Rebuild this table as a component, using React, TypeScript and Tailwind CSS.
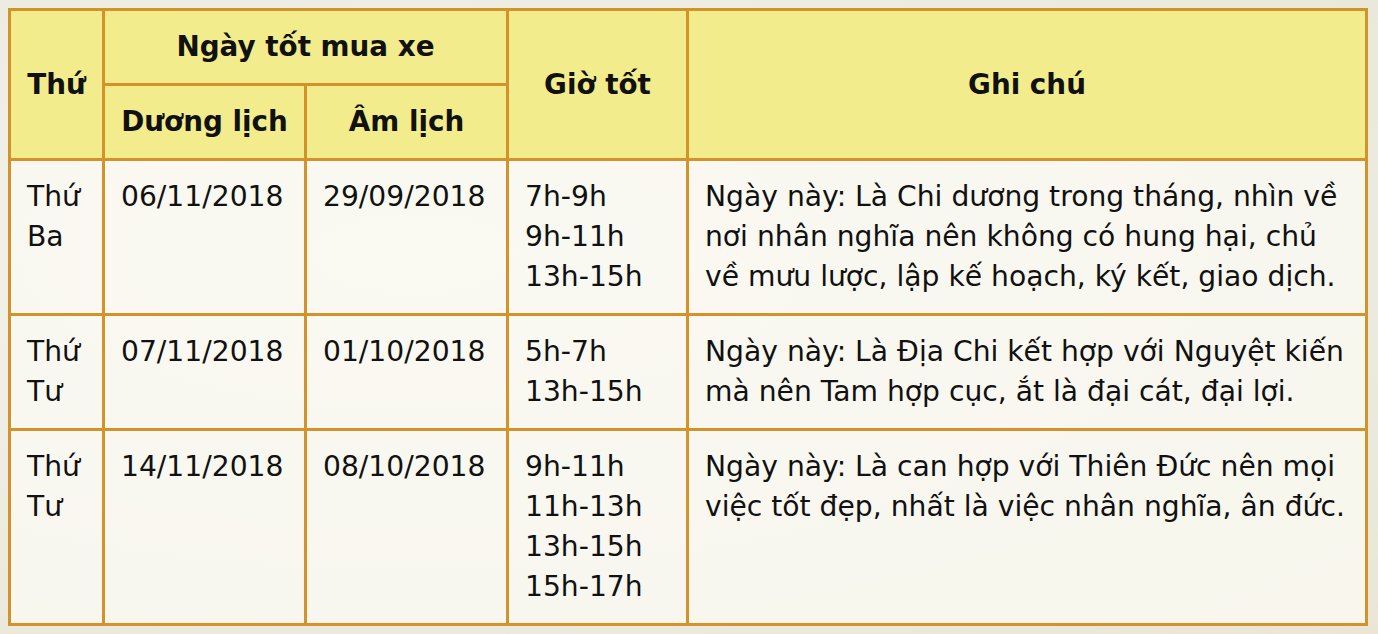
const rows = [
  {
    thu: ["Thứ", "Ba"],
    duong: "06/11/2018",
    am: "29/09/2018",
    gio: ["7h-9h", "9h-11h", "13h-15h"],
    note: [
      "Ngày này: Là Chi dương trong tháng, nhìn về",
      "nơi nhân nghĩa nên không có hung hại, chủ",
      "về mưu lược, lập kế hoạch, ký kết, giao dịch.",
    ],
  },
  {
    thu: ["Thứ", "Tư"],
    duong: "07/11/2018",
    am: "01/10/2018",
    gio: ["5h-7h", "13h-15h"],
    note: [
      "Ngày này: Là Địa Chi kết hợp với Nguyệt kiến",
      "mà nên Tam hợp cục, ắt là đại cát, đại lợi.",
    ],
  },
  {
    thu: ["Thứ", "Tư"],
    duong: "14/11/2018",
    am: "08/10/2018",
    gio: ["9h-11h", "11h-13h", "13h-15h", "15h-17h"],
    note: [
      "Ngày này: Là can hợp với Thiên Đức nên mọi",
      "việc tốt đẹp, nhất là việc nhân nghĩa, ân đức.",
    ],
  },
];

const th = "border-[3px] border-[#d3932a] bg-[#f2ec8c] px-4 py-4 text-center text-[27.8px] font-bold";
const td = "border-[3px] border-[#d3932a] px-4 py-4 align-top";

export default function App() {
  return (
    <div className="min-h-[634px] w-full bg-[#efede2] bg-[radial-gradient(ellipse_at_30%_40%,#f6f5ee_0%,#ecebe0_60%,#e9e6d6_100%)] p-[8px] font-['DejaVu_Sans',sans-serif] text-[28.2px] leading-[40px] text-[#111]">
      <table className="w-[1360px] border-collapse border-[3px] border-[#d3932a]">
        <colgroup>
          <col className="w-[94px]" />
          <col className="w-[202px]" />
          <col className="w-[202px]" />
          <col className="w-[180px]" />
          <col />
        </colgroup>
        <thead>
          <tr>
            <th rowSpan={2} className={th}>
              Thứ
            </th>
            <th colSpan={2} className={th}>
              Ngày tốt mua xe
            </th>
            <th rowSpan={2} className={th}>
              Giờ tốt
            </th>
            <th rowSpan={2} className={th}>
              Ghi chú
            </th>
          </tr>
          <tr>
            <th className={th}>Dương lịch</th>
            <th className={th}>Âm lịch</th>
          </tr>
        </thead>
        <tbody className="bg-[#fbfaf2]/80">
          {rows.map((r, i) => (
            <tr key={i}>
              <td className={td}>
                {r.thu.map((t) => (
                  <div key={t}>{t}</div>
                ))}
              </td>
              <td className={td}>{r.duong}</td>
              <td className={td}>{r.am}</td>
              <td className={td}>
                {r.gio.map((g) => (
                  <div key={g}>{g}</div>
                ))}
              </td>
              <td className={`${td} pr-1`}>
                {r.note.map((n) => (
                  <div key={n} className="whitespace-nowrap">
                    {n}
                  </div>
                ))}
              </td>
            </tr>
          ))}
        </tbody>
      </table>
    </div>
  );
}
